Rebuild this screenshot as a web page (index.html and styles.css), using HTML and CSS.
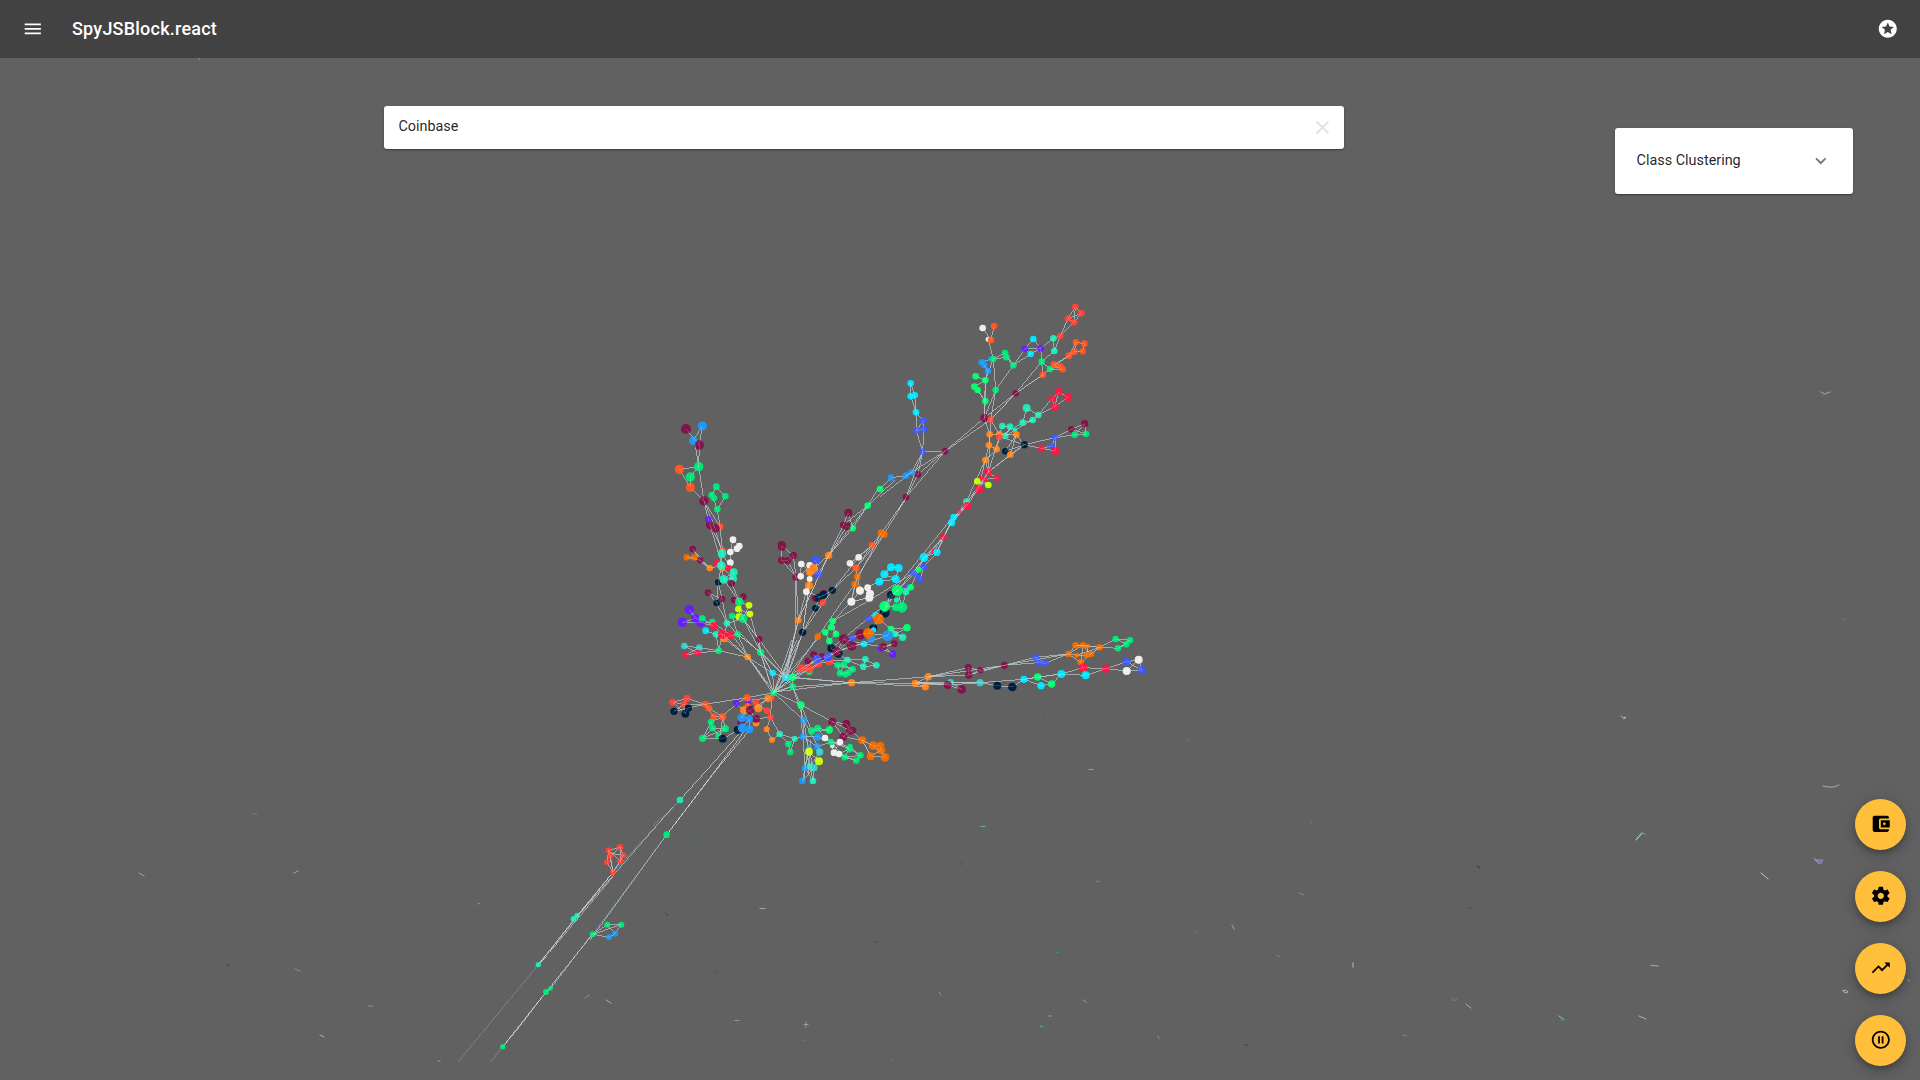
FILE: index.html
```html
<!DOCTYPE html>
<html lang="en">
<head>
<meta charset="utf-8">
<title>SpyJSBlock.react</title>
<link rel="stylesheet" href="styles.css">
</head>
<body>
<header class="app-bar">
  <svg class="icon" viewBox="0 0 24 24"><path d="M3 18h18v-2H3v2zm0-5h18v-2H3v2zm0-7v2h18V6H3z"/></svg>
  <h1 class="app-title">SpyJSBlock.react</h1>
  <svg class="icon" viewBox="0 0 24 24"><path d="M11.99 2C6.47 2 2 6.48 2 12s4.47 10 9.99 10C17.52 22 22 17.52 22 12S17.52 2 11.99 2zm4.24 16L12 15.45 7.77 18l1.12-4.81-3.73-3.23 4.92-.42L12 5l1.92 4.53 4.92.42-3.73 3.23L16.23 18z"/></svg>
</header>
<main class="stage">
  <svg class="graph" id="graph" viewBox="0 58 1920 1004"></svg>
  <div class="search">
    <span>Coinbase</span>
    <svg class="clear" viewBox="0 0 12 12"><path d="M.5.5l11 11M11.5.5l-11 11"/></svg>
  </div>
  <div class="panel">
    <span>Class Clustering</span>
    <svg class="chevron" viewBox="0 0 24 24"><path d="M16.59 8.59L12 13.17 7.41 8.59 6 10l6 6 6-6z"/></svg>
  </div>
  <nav class="actions">
    <button class="fab"><svg class="icon" viewBox="0 0 24 24"><path d="M21 18v1c0 1.1-.9 2-2 2H5c-1.11 0-2-.9-2-2V5c0-1.1.89-2 2-2h14c1.1 0 2 .9 2 2v1h-9c-1.11 0-2 .9-2 2v8c0 1.1.89 2 2 2h9zm-9-2h10V8H12v8zm4-2.5c-.83 0-1.5-.67-1.5-1.5s.67-1.5 1.5-1.5 1.5.67 1.5 1.5-.67 1.5-1.5 1.5z"/></svg></button>
    <button class="fab"><svg class="icon" viewBox="0 0 24 24"><path d="M19.43 12.98c.04-.32.07-.64.07-.98s-.03-.66-.07-.98l2.11-1.65c.19-.15.24-.42.12-.64l-2-3.46c-.12-.22-.39-.3-.61-.22l-2.49 1c-.52-.4-1.08-.73-1.69-.98l-.38-2.65C14.46 2.18 14.25 2 14 2h-4c-.25 0-.46.18-.49.42l-.38 2.65c-.61.25-1.17.59-1.69.98l-2.49-1c-.23-.09-.49 0-.61.22l-2 3.46c-.13.22-.07.49.12.64l2.11 1.65c-.04.32-.07.65-.07.98s.03.66.07.98l-2.11 1.65c-.19.15-.24.42-.12.64l2 3.46c.12.22.39.3.61.22l2.49-1c.52.4 1.08.73 1.69.98l.38 2.65c.03.24.24.42.49.42h4c.25 0 .46-.18.49-.42l.38-2.65c.61-.25 1.17-.59 1.69-.98l2.49 1c.23.09.49 0 .61-.22l2-3.46c.12-.22.07-.49-.12-.64l-2.11-1.65zM12 15.5c-1.93 0-3.5-1.57-3.5-3.5s1.57-3.5 3.5-3.5 3.5 1.57 3.5 3.5-1.57 3.5-3.5 3.5z"/></svg></button>
    <button class="fab"><svg class="icon" viewBox="0 0 24 24"><path d="M16 6l2.29 2.29-4.88 4.88-4-4L2 16.59 3.41 18l6-6 4 4 6.3-6.29L22 12V6z"/></svg></button>
    <button class="fab"><svg class="icon" viewBox="0 0 24 24"><path d="M9 16h2V8H9v8zm3-14C6.48 2 2 6.48 2 12s4.48 10 10 10 10-4.48 10-10S17.52 2 12 2zm0 18c-4.41 0-8-3.59-8-8s3.59-8 8-8 8 3.59 8 8-3.59 8-8 8zm1-4h2V8h-2v8z"/></svg></button>
  </nav>
</main>
<script src="graph.js"></script>
</body>
</html>
```
FILE: styles.css
```css
* { box-sizing: border-box; }

body {
  margin: 0;
  height: 100vh;
  overflow: hidden;
  display: flex;
  flex-direction: column;
  background: #616161;
  color: rgba(0, 0, 0, 0.87);
  font: 14.4px/20px Roboto, "Liberation Sans", sans-serif;
}

.icon {
  width: 21.6px;
  height: 21.6px;
  fill: currentColor;
  flex: none;
  display: block;
}

.app-bar {
  height: 58px;
  flex: none;
  display: flex;
  align-items: center;
  padding: 0 21.6px 1.4px;
  background: #424242;
  color: #fff;
}

.app-title {
  flex: 1;
  margin: 1px 0 0 28.8px;
  font-size: 18px;
  font-weight: 500;
  letter-spacing: 0.22px;
}

.stage {
  position: relative;
  flex: 1;
}

.graph {
  display: block;
  width: 1920px;
  height: 1004px;
  overflow: hidden;
}

.link {
  fill: none;
  stroke: #a3b2b8;
  stroke-width: 0.95;
  opacity: 0.75;
  shape-rendering: crispEdges;
}

.link-dim {
  stroke: #78909c;
}

.link-bright {
  stroke: #d4dcdc;
}

.link-over {
  stroke: #fff;
  opacity: 0.16;
}

.search,
.panel {
  position: absolute;
  display: flex;
  align-items: center;
  justify-content: space-between;
  background: #fff;
  border-radius: 3px;
  box-shadow: 0 1px 3px rgba(0, 0, 0, 0.2), 0 1px 1px rgba(0, 0, 0, 0.14), 0 2px 1px -1px rgba(0, 0, 0, 0.12);
}

.search {
  left: 384px;
  top: 48px;
  width: 960px;
  height: 43px;
  padding: 0 15px 2px 14.4px;
}

.clear {
  width: 13px;
  height: 13px;
  margin-top: 1px;
  stroke: #e0e0e0;
  stroke-width: 1.7;
}

.panel {
  left: 1615px;
  top: 70px;
  width: 238px;
  height: 66px;
  padding: 0 21.6px 0 21.6px;
}

.chevron {
  width: 21.6px;
  height: 21.6px;
  fill: rgba(0, 0, 0, 0.54);
}

.actions {
  position: absolute;
  right: 14px;
  bottom: 14.4px;
  display: grid;
  gap: 21.2px;
}

.fab {
  width: 50.8px;
  height: 50.8px;
  padding: 0;
  border: 0;
  border-radius: 50%;
  display: grid;
  place-items: center;
  background: #ffbf3b;
  color: #000;
  box-shadow: 0 3px 5px -1px rgba(0, 0, 0, 0.2), 0 6px 10px rgba(0, 0, 0, 0.14), 0 1px 18px rgba(0, 0, 0, 0.12);
}
```
FILE: graph.js
```js
const COLORS = {
  m: '#81144a', b: '#2196f3', g: '#00e676', G: '#00ff6e', o: '#ff851b', O: '#ef6c00',
  r: '#ff5722', R: '#ff4136', p: '#ff1744', w: '#eeeeee', n: '#001f3f', t: '#1de9b6',
  c: '#00e5ff', C: '#39cccc', i: '#3d5afe', v: '#651fff', l: '#c6ff00'
};

// Each cluster has its own origin and a scale of a third of a pixel.
// nodes: "colour x y [radius]", links: polylines "x,y x,y ..."
const clusters = [
  { // left branch
    at: [660, 400], r: 10,
    links: [
      '78,87 118,135 127,78 100,122', '104,125 116,200', '118,135 116,200', '58,208 116,200 91,231 91,262 58,208', '91,262 132,303', '116,200 132,303',
      '132,303 145,358 166,385 132,303', '132,303 180,380 188,460', '169,260 155,285 172,328 196,289 169,260', '172,328 180,380', '150,375 188,450', '145,358 186,495',
      '166,385 186,461 184,497 191,538 221,517 186,461', '219,419 211,456 238,438 219,419', '211,456 211,488', '98,447 121,481 80,472', '80,472 103,472 149,504 184,497', '121,481 149,504', '98,447 149,504',
      '175,547 184,497 219,536 191,538 238,606', '221,517 215,550 238,606', '170,490 206,505', '144,578 186,597 170,609 144,578', '175,547 170,609', '175,547 186,597 201,670',
      '170,609 201,670', '222,600 250,590 238,606 267,616 249,656 235,627 270,642 236,650', '238,606 249,656 297,718', '216,648 249,656 201,670 233,703', '216,648 233,703',
      '88,629 106,655 67,667 122,667 88,629', '106,655 122,667 160,678', '127,655 160,678', '122,667 157,666 212,706', '137,692 168,703 188,703 176,752', '201,670 192,715 233,703', '212,706 233,703 302,757', '160,678 188,703 263,771',
      '73,738 118,743 176,752', '73,738 113,759 77,765', '77,765 118,743', '113,759 176,752 168,703', '176,752 263,771 337,819', '192,715 263,771 233,703', '233,703 302,757 270,642', '297,718 302,757 380,832', '249,656 337,819', '297,718 380,832', '302,757 337,819', '263,771 320,850', '302,757 330,850', '249,656 297,718'
    ],
    nodes: 'b 127 78 14;m 78 87 15;b 100 122 13;m 118 135 14;g 116 200 14;r 58 208 14;g 91 231 14;r 91 262 14;m 132 303 14;g 169 260;g 155 285;g 162 294;g 196 289;g 172 328;v 145 358;r 180 380;m 150 375 12;m 166 385 13;w 219 419;w 238 438;w 231 446;w 211 456;r 188 452;t 186 461 13;m 98 447;O 80 472;O 103 472;m 121 481;o 149 504;p 170 490;w 211 488;o 186 505;t 184 497 13;p 206 505;t 221 517 12;t 219 536 12;n 175 547;m 215 550;t 191 538 13;m 144 578;m 186 597;n 170 609;m 222 600;m 250 590;g 238 606 13;l 267 616;l 235 627;l 270 642;l 236 650;g 216 648;g 249 656 13;t 201 670;v 88 629 14;v 106 655 13;v 67 667 14;v 122 667 14;g 127 655;g 157 666;p 162 678 12;c 137 692;t 168 703;o 192 715 12;p 188 703 14;p 212 706 12;g 233 703;C 73 738;C 118 743;p 77 765;p 113 759;g 176 752;m 297 718;g 302 757 11;o 263 771'
  },
  { // upper right branch
    at: [880, 280], r: 10,
    links: [
      '92,310 92,349 108,397 104,346 92,310', '104,346 92,349', '108,397 109,452 130,422 131,448 109,452', '108,397 130,422', '109,452 128,515 131,448', '128,515 195,514', '128,515 114,583', '128,515 78,652 114,583', '128,515 95,577', '195,514 78,587', '195,514 114,583', '195,514 78,652', '195,514 313,414 407,340', '195,514 332,419 407,340', '33,593 78,587 95,577 114,583', '78,652 55,690', '95,577 0,650', '0,627 33,593',
      '308,144 333,180 342,138', '325,178 340,237 375,219 400,256 379,232 340,237', '340,237 347,330 400,256', '305,247 332,237', '305,247 324,273 313,255', '324,273 316,301 287,289', '283,320 316,301 316,363 293,330', '283,320 316,363 313,414', '316,301 313,414', '340,237 316,301', '347,330 313,414', '347,330 332,419', '400,256 435,207 460,177 482,205 435,207 452,222 482,205', '400,256 452,222', '482,205 520,175 541,168 523,213 520,175', '482,205 485,245 523,213', '541,168 564,116 586,81 604,100 564,116 582,127 604,100', '541,168 582,127 586,81', '485,245 510,267 567,227', '485,245 488,285 407,340', '485,245 407,340', '488,285 510,267 548,268 522,254', '510,267 541,260', '522,254 567,227 588,187 613,191 608,214 583,215 567,227', '583,215 588,187', '407,340 488,285', '332,419 407,340',
      '332,419 358,463 367,438 390,440 376,468', '440,384 428,428 458,420 475,405 440,384', '358,470 428,428', '376,468 405,450 458,420', '475,405 516,356 536,336 564,352 524,380 516,356', '475,405 524,380 536,336', '313,414 329,463 358,463 409,464', '329,463 327,496 316,540', '358,470 350,508 327,496', '358,470 433,494 409,464', '376,514 433,494 391,524', '409,464 391,524', '409,464 376,514', '433,494 525,473 574,448 614,431 618,462 584,464 525,473', '433,494 484,505 515,498 525,473 526,513 484,505', '574,448 618,462', '584,464 614,431', '350,508 316,540 325,576', '332,419 325,576', '358,470 325,576', '391,524 325,576', '433,494 325,576', '325,576 350,594 315,598', '303,594 325,615 292,604', '325,576 297,628 259,665', '325,576 261,678', '316,540 259,665 220,717', '325,576 245,690 216,722', '316,540 303,594', '261,678 220,717'
    ],
    nodes: 'c 92 310;c 92 349;c 104 346;c 108 397;i 130 422;i 109 452;i 131 448;i 128 515;m 195 514;b 95 577;m 114 583;b 78 587;b 33 593;m 78 652;G 0 627;w 308 144;r 342 138;w 325 178 8;r 333 180;b 332 237 8;g 340 237;g 375 219;g 379 232;b 305 247;b 313 255;b 324 273;G 287 289;G 316 301;G 283 320;G 293 330;g 347 330;G 316 363;g 400 256;v 435 207;c 460 177;v 482 205;c 452 222;t 520 175;t 523 213;R 541 168;g 485 245;g 510 267;R 586 81;R 604 100;R 564 116;R 582 127;r 488 285;r 522 254;r 541 260;r 548 268;r 567 227;r 583 215;r 588 187;r 613 191;r 608 214;m 407 340;m 313 414 12;R 332 419;t 440 384 12;t 428 428;t 458 420;t 475 405;p 536 336 12;p 564 352 12;p 516 356;p 524 380 12;t 367 438;t 390 440;t 376 468;t 405 450 7;o 329 463;o 358 463;R 358 472;o 409 464;o 327 496;o 350 508;n 376 514;n 433 494 11;o 391 524;o 316 540;i 525 473;i 515 498;p 484 505;p 526 513 12;m 574 448;m 614 431 11;g 584 464;g 618 462;p 325 576 12;p 350 594 9;p 315 598 8;p 303 594 7;l 292 604;l 325 615;p 297 628 12;t 259 665;p 261 678 12;p 238 695 7;c 221 711 10'
  },
  { // centre branches
    at: [770, 500], r: 10,
    links: [
      '235,38 220,75 293,17', '230,79 248,85 235,38', '248,85 293,17', '293,17 176,166', '230,79 176,166', '220,75 176,166 248,85', '293,17 324,-33', '293,17 375,-60', '176,166 145,223 137,180', '176,166 131,205', '176,166 85,361', '35,137 35,181 53,182 70,166 35,137', '35,181 78,231 53,182', '70,166 78,231 85,361', '94,192 91,229 119,196', '94,192 120,216 117,257', '145,223 120,216', '119,237 109,275 85,361', '117,257 98,397', '109,275 150,290 136,325', '135,295 164,285 187,271 148,293', '158,308 136,325 98,397 187,271', '187,271 258,204 240,190 306,136', '187,271 266,172 306,136', '240,190 266,172', '408,-5 334,99 306,136 258,204', '408,-5 342,103 258,204', '334,99 254,252', '342,103 262,230',
      '258,204 270,272 293,263 300,281 298,293 244,305 270,272', '254,252 244,305 262,230', '254,252 143,410', '244,305 188,364', '244,305 298,293', '270,272 328,245 343,223 363,202 386,204 377,237 328,245', '363,202 343,223 377,237', '85,361 45,530', '98,397 48,532', '143,410 60,530', '78,231 75,400 48,532', '117,257 98,397 52,532', '176,166 85,361 40,530',
      '188,364 183,382 166,397 178,423 198,402 183,382', '188,364 198,402', '178,423 184,445', '184,445 200,455 222,418 245,437 200,455', '200,455 245,415 272,403', '245,437 282,432 340,440 373,431 333,445 368,462 340,440', '282,432 222,418', '222,418 272,403 295,400 326,357 382,271', '295,400 353,407 363,387 411,383 375,402 398,412 363,387', '326,357 344,319 396,322 382,271 422,262 408,276', '344,319 382,271', '326,357 363,387', '295,358 317,346', '310,385 295,400', '360,285 382,271 445,209 461,201 450,238', '422,262 445,209', '408,276 396,322', '360,285 344,338', '445,209 462,172 501,157 520,111 492,153 462,172', '461,201 501,157 542,70', '428,220 462,172 520,111 545,62', '382,271 520,111', '360,285 445,180 545,55', '542,75 588,18', '520,111 548,57 590,12', '184,445 326,330 382,271', '188,364 300,300 428,220',
      '94,505 119,506 145,491 178,484 232,480', '94,505 142,477 174,471 200,455', '113,483 131,465 142,477', '68,532 94,505', '68,532 119,506', '118,517 145,491', '68,532 143,478 200,455', '178,484 203,496 221,494 210,520 226,523 248,508 221,494', '203,496 210,520 235,518', '232,480 286,478 319,496 280,500 232,480', '286,478 280,500', '200,455 353,407', '203,496 248,508', '200,455 232,480', '48,532 245,548 68,560', '68,532 245,548 475,530', '245,548 436,550 475,530', '245,548 466,560 436,550', '466,560 475,530', '475,530 520,525', '436,550 540,552', '12,576 245,548', '12,576 48,532 143,478', '12,576 68,532', '12,576 98,520 200,455', '12,576 68,560 68,532'
    ],
    nodes: 'G 293 17;m 235 38 12;m 220 75;G 248 85;m 230 79 12;o 176 166 11;m 35 135 12;m 36 141 12;m 35 181 11;m 53 182 11;m 70 166 11;m 78 231 11;w 94 192;w 119 196;w 92 229;w 119 237 9;i 137 180 12;i 145 223 12;o 131 205 13;o 120 216 12;o 117 257 12;w 109 275;m 162 280;n 160 284 12;m 135 295;n 187 271 11;n 146 294 13;R 158 308;n 136 325;o 85 361;n 98 397 11;O 334 99 11;O 342 103 11;r 306 136;w 266 172;w 240 190;r 258 204 11;O 262 230;O 254 252;w 293 263;o 268 268;w 270 272 12;w 300 281 12;w 298 293 12;w 244 305 12;c 363 202 12;c 386 204 12;c 343 223 12;c 377 237 12;c 328 245 12;O 143 410;G 188 364;G 183 382;G 166 397;G 198 402;G 178 423;p 520 111;p 492 153 8;c 501 157 11;c 462 172 13;c 545 68 11;i 461 201;i 428 220 9;i 443 227 8;i 450 238;G 446 209 9;t 408 276;i 410 258 7;t 380 300 8;G 422 262;n 363 285 12;n 344 338 15;G 382 271 17;G 344 319 16;g 378 322 12;g 396 322 16;i 297 358;c 317 346;n 310 385 12;c 311 390 8;O 326 357 16;G 363 387;G 411 383 11;t 375 402;t 398 412 11;b 303 415 13;b 353 407 16;c 282 432 10;i 245 415;m 272 403 16;O 295 400 16;m 222 418 15;m 245 437 15;v 333 445;m 340 440 11;m 373 431;v 368 462 11;n 184 445 12;n 205 460 13;m 200 455 13;m 113 483;m 131 465 11;m 155 470;g 118 517 9;R 145 491 11;R 178 484 12;R 94 505 12;R 119 506 13;i 142 477 13;i 174 471 13;t 232 480;t 286 478;t 280 500;t 319 496;g 203 496;g 221 494;g 210 520;g 226 523;g 235 518;g 248 508;G 68 532 11;C 45 534 9;c 51 533 8;g 68 560;o 245 548 11;o 475 530 11;o 436 550 11;o 466 560 11'
  },
  { // right branch
    at: [880, 610], r: 10,
    links: [
      '145,200 265,173 301,181 373,166 266,195 265,173', '145,200 266,195 301,181', '145,200 373,166 467,142 565,132', '373,166 475,158 496,160 565,132', '467,142 496,160', '467,142 475,158', '373,166 565,132', '106,220 203,225 245,238', '212,217 300,218 203,225', '203,225 106,216 300,218', '300,218 352,227 397,231 432,208', '300,218 432,208', '212,217 245,238', '432,208 473,201 515,222 483,227 432,208', '432,208 544,192 515,222', '473,201 544,192 609,173 678,176 617,196 544,192', '609,173 617,196', '609,173 602,157', '678,176 739,155 776,149 785,180 740,183 678,176', '739,155 785,180', '776,149 740,183', '565,132 587,106 609,106 659,112 633,132 620,135 590,136 565,132', '565,132 602,157 659,112', '587,106 624,108 620,135', '565,132 609,106 633,132', '587,106 659,112', '602,157 609,106', '590,136 659,112 707,87 750,91 739,103 707,87', '659,112 714,115 739,103', '714,115 750,91'
    ],
    nodes: 'm 265 173 11;m 301 181;m 266 195 11;m 373 166 11;C 212 217;m 203 225 12;m 245 238 13;C 300 218 11;n 352 227 12;n 397 231 13;c 432 208 11;G 473 201 11;c 483 227 11;G 515 222 11;c 544 192 12;i 467 142 10;i 475 158 10;i 496 160 10;O 565 132;O 587 106;O 609 106;O 624 108 7;O 590 136 8;O 633 132;O 620 135;O 602 157;O 659 112;p 609 173 13;c 617 196 12;p 678 176 12;g 707 87;g 750 91;g 739 103;g 714 115;i 739 155 12;w 776 149 12;w 740 183 12;i 785 180 12'
  },
  { // lower clusters around the hub
    at: [640, 640], r: 10,
    links: [
      '398,99 440,114 401,158 398,99', '440,114 457,139 483,195', '401,158 491,241', '410,160 483,195', '401,158 321,173 196,193', '401,158 384,175 325,180', '401,158 395,180 391,232', '380,212 350,190', '457,112 401,158 457,139', '323,50 398,160', '361,38 401,158', '280,-10 398,150', '300,-20 440,114', '401,158 455,0', '401,158 470,0', '401,158 478,0', '425,125 530,0',
      '98,187 141,175 132,193 98,187', '102,214 132,193 196,193', '136,221 145,204 196,193', '98,187 136,221', '141,175 196,193 207,205 248,230 221,230 196,193', '102,214 145,204', '132,193 136,221', '248,230 289,190 321,173', '248,230 213,246 218,264 188,295 213,246', '248,230 256,266 236,288 218,264 256,266', '188,295 256,266', '248,230 240,290', '188,295 248,296 295,270', '289,190 312,211 330,212 384,175', '325,180 348,188 355,205 384,175', '303,235 330,212 348,236', '305,263 328,238 328,268', '348,236 391,232', '321,173 325,200 303,235',
      '391,232 380,268 396,300', '391,232 419,282 464,296 489,290', '419,282 445,312 451,336', '464,296 445,312', '396,300 419,282', '464,296 451,336', '483,195 577,245', '457,139 491,241', '483,195 487,290', '483,195 515,273', '491,241 505,322 495,385', '491,241 493,423', '491,241 534,320 539,336', '489,290 533,291', '489,290 532,320', '507,335 537,364 522,383', '507,335 495,385 487,423', '539,336 510,380 519,423', '507,322 510,380', '495,385 519,423', '522,383 488,423', '522,383 519,423', '500,290 507,400', '510,300 515,390',
      '515,273 533,265 568,270 577,245', '515,273 568,270', '533,265 555,294', '577,245 619,252 630,271 577,245', '577,245 610,290 630,271 667,301', '619,252 638,271 610,290', '610,290 667,301', '533,291 573,306 600,306 628,326 573,306', '573,306 582,338 597,342 628,326 661,346 649,362 614,352 628,326', '573,306 614,352 661,346', '600,306 582,338 614,352', '555,294 628,326', '597,342 649,362', '628,320 661,346', '667,301 699,317 721,317 723,330 667,301', '667,301 692,349 735,352', '692,349 723,330 735,352', '699,317 735,352', '667,301 690,345', '532,320 573,306'
    ],
    nodes: 'c 398 99;C 436 113;c 440 116 7;G 457 112 10;g 457 139 9;R 394 175 10;g 401 158 10;R 98 187 11;R 141 175 11;R 132 193 11;n 102 214 11;n 145 204 11;n 136 221 12;r 196 193;r 207 205;r 221 230;r 248 230 11;g 213 246;g 218 264;g 256 266 11;g 236 288;g 188 295 11;n 248 296 12;v 289 190;v 325 180;r 321 173 11;R 348 188;r 323 200;o 384 175 11;o 312 211 12;m 330 210 13;o 355 205 12;R 381 212;R 391 232;o 348 250;m 348 236 12;m 303 248 11;n 293 270 12;b 305 234 13;b 328 237 11;b 307 264 14;b 328 268 12;o 380 268 9;o 396 300 9;t 419 282;t 464 296 9;g 445 312;g 451 336;G 483 195 11;b 491 241;b 489 290;b 533 291 11;g 515 273 11;g 533 265 11;G 568 270 11;w 555 294;b 507 322 9;b 532 320;l 507 335 12;C 539 336 11;l 537 364 12;b 495 385;t 510 380;C 522 383 11;b 487 423;t 519 423;m 577 245 12;m 619 252 12;m 630 272 12;m 638 271 11;m 610 290 12;w 577 318 7;w 600 306;w 582 338;w 597 342;g 573 306;g 630 320 9;g 628 328;g 661 346;g 614 352;g 649 362;O 667 301 12;O 699 317 13;O 721 317 12;O 723 330 13;O 692 349 12;O 735 352 13'
  },
  { // trailing chain
    at: [440, 770], r: 9,
    bright: ['720,90 808,-8 915,-128', '680,194 827,0 925,-132', '680,194 830,-2 935,-128', '519,307 295,584', '320,560 295,584', '318,666 188,830'],
    dim: ['720,90 519,307', '720,90 640,168', '680,194 458,493', '295,584 55,875', '188,830 153,875'],
    links: ['700,110 411,440', '519,320 330,545', '458,493 318,666', '680,194 450,510', '519,307 411,437 295,584', '506,241 540,232 550,256 519,307', '506,241 501,277 519,307 511,258', '511,258 540,232', '506,241 541,274 550,256 512,250', '519,307 541,274 540,232', '506,241 519,307', '458,493 502,464 544,464 525,491 502,464', '458,493 507,502 525,491', '458,493 544,464', '332,655 318,666 235,775 188,830', '450,500 332,655'],
    nodes: 't 720 90 10;g 680 194 10;R 506 241;R 540 232 10;R 511 258;R 550 256;R 501 277;R 541 274;R 519 307;t 411 437 8;t 401 447;g 458 493;g 502 464;g 544 464;b 525 491;b 507 502;t 295 584 8;g 332 655 7;g 318 666;g 188 830 8'
  }
];

// Distant fragments: colour, then a polyline in page pixels.
const fragments = [
  ['#b7d0dc', '1621,716 1623,718 1626,717 1624,719'], ['#a8c7d0', '1823,786 1828,787 1834,787 1839,785'], ['#b34a5c', '1829,788 1830,792'],
  ['#3fd0a0', '1636,839 1639,835 1642,833 1645,834'], ['#b9e0dd', '1636,840 1640,836 1642,833'], ['#8f4b20', '1520,846 1522,845'], ['#22223f', '1477,866 1480,868'],
  ['#a79be8', '1814,858 1819,864 1823,860 1815,860 1822,863'], ['#c4e3e6', '1761,873 1768,879'], ['#33409a', '1469,908 1471,908'], ['#9dd0b6', '1651,965.5 1658,966'],
  ['#5b93b5', '1452,998 1454,1001 1457,999'], ['#d5b5ae', '1466,1004 1471,1008'], ['#c2d0c6', '1559,1016 1563,1019'], ['#27b48d', '1561,1020 1565,1020'],
  ['#a5ced8', '1639,1016 1646,1019'], ['#b08a68', '1403,1035 1406,1036'], ['#b7cad0', '1843,990 1845,993 1848,992 1846,990 1843,991'],
  ['#484079', '1043,718 1044,719'], ['#27a874', '1187,739 1190,741'], ['#c7a48e', '1089,769.5 1093,769.5'], ['#65c9a5', '981,826.5 985,826.5'], ['#8d8148', '1310,821 1312,824'],
  ['#1a6b44', '1394,819 1395,819'], ['#294a63', '960,865 962,863'], ['#35805e', '897,882 899,884'], ['#8b7ee0', '1096,881 1099,882'], ['#7792c9', '1299,893 1304,895'],
  ['#b4b4c5', '760,908.5 765,908.5'], ['#9a5d31', '1020,914.5 1022,914.5'], ['#326a8a', '1160,927 1162,927'], ['#999999', '1196,932 1197,933'], ['#6dd9bd', '1232,925 1234,929'],
  ['#2b4c65', '875,942 877,942'], ['#27a874', '1056,952.5 1058,952.5'], ['#6c94ac', '1277,955 1280,957'], ['#dcdcbc', '1353,963 1353,967'], ['#83502f', '1046,978 1048,978'],
  ['#999999', '939,992 941,995'], ['#a6b85d', '1083,1000 1086,1002'], ['#c1c181', '1049,1016 1051,1016'], ['#43d19c', '1040,1026 1043,1027'], ['#9cb2bd', '804,1024.5 808,1024.5'], ['#9cb2bd', '806,1022 806,1027'],
  ['#8e93a0', '1158,1036 1159,1039'], ['#27a874', '1187,1032 1188,1032'], ['#6a1f3b', '1245,1045 1248,1045'], ['#a54158', '1366,1041 1369,1046'], ['#9c6b43', '804,1040.5 806,1040.5'], ['#777b91', '892,1060 893,1060'],
  ['#7fb59c', '478,904 480,903'], ['#3b347d', '666,914 668,915'], ['#83374a', '716,972 718,972'], ['#999f9f', '585,998 589,995'], ['#a9b8da', '606,1000 611,1003'], ['#a3a3a3', '735,1020.5 739,1020.5'], ['#25898f', '696,838.5 698,838.5'],
  ['#a9c3bd', '1821,392 1825,394 1830,392'], ['#6d8b93', '1822,396 1826,393'], ['#8a7c6d', '253,814 257,814'], ['#a0b9bb', '139,873 144,876'], ['#b7c6ae', '294,873 298,871'], ['#9b9b9b', '295,969 300,971'], ['#9b9b9b', '368,1006 373,1006'], ['#b2cbd1', '320,1035 324,1037'],
  ['#88a39a', '198,57 200,60'], ['#3c3c3c', '227,965 229,965'], ['#45515a', '24,886 25,887'], ['#7a4b55', '263,936 265,936'], ['#b8d2da', '1908,980 1909,981'], ['#8a8a66', '1843,619 1845,620'], ['#3d7d7d', '1498,284 1499,285'], ['#8c6a4f', '1755,856 1756,856'], ['#aaa', '438,1061 440,1061']
];

const svg = document.getElementById('graph');

function add(parent, name, attrs) {
  const el = document.createElementNS('http://www.w3.org/2000/svg', name);
  for (const key in attrs) el.setAttribute(key, attrs[key]);
  parent.appendChild(el);
  return el;
}

function drawLinks(list, origin, className) {
  for (const link of list || []) {
    const points = link.split(' ').map(pair => {
      const [x, y] = pair.split(',').map(Number);
      return (origin[0] + x / 3).toFixed(1) + ',' + (origin[1] + y / 3).toFixed(1);
    }).join(' ');
    add(svg, 'polyline', { points, class: className });
  }
}

for (const [stroke, points] of fragments) {
  add(svg, 'polyline', { points, stroke, fill: 'none', 'stroke-width': 1, 'stroke-linecap': 'square', opacity: 0.8 });
}

for (const c of clusters) {
  drawLinks(c.dim, c.at, 'link link-dim');
  drawLinks(c.links, c.at, 'link');
  drawLinks(c.bright, c.at, 'link link-bright');
}

for (const c of clusters) {
  for (const item of c.nodes.split(';')) {
    const [color, x, y, r] = item.split(' ');
    add(svg, 'circle', { cx: c.at[0] + x / 3, cy: c.at[1] + y / 3, r: (r || c.r) / 3, fill: COLORS[color] });
  }
}

// A faint second pass lets links show through the nodes they cross.
for (const c of clusters) drawLinks(c.links, c.at, 'link link-over');
```
